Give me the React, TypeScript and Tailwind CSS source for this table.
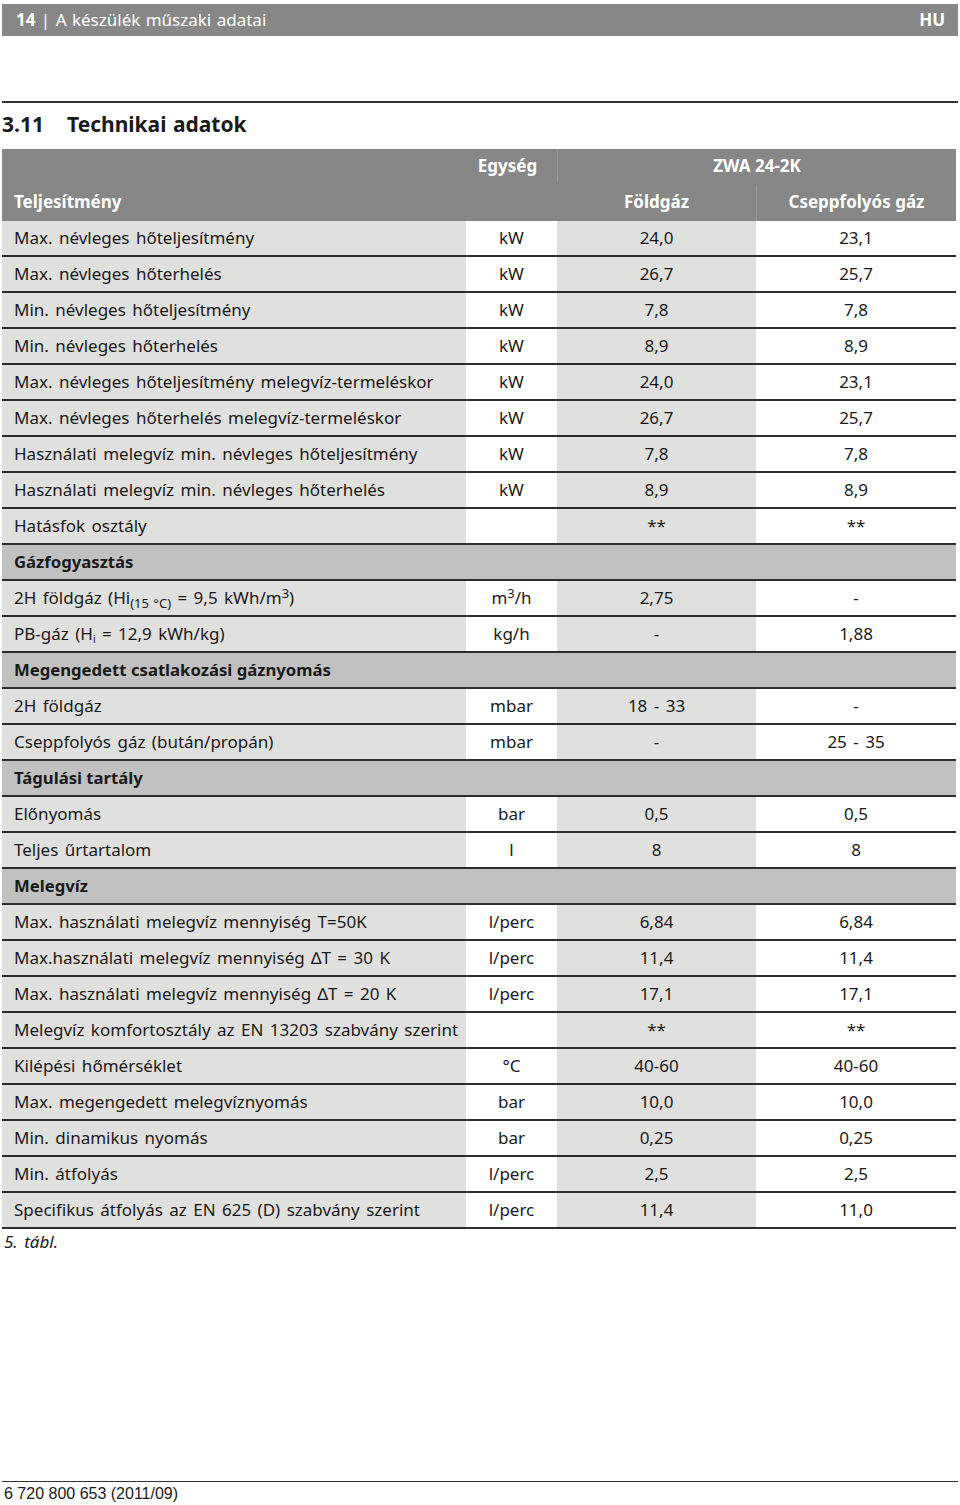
type Row =
  | { kind: "section"; label: string }
  | { kind: "data"; label: React.ReactNode; unit: React.ReactNode; a: string; b: string };

const rows: Row[] = [
  { kind: "data", label: "Max. névleges hőteljesítmény", unit: "kW", a: "24,0", b: "23,1" },
  { kind: "data", label: "Max. névleges hőterhelés", unit: "kW", a: "26,7", b: "25,7" },
  { kind: "data", label: "Min. névleges hőteljesítmény", unit: "kW", a: "7,8", b: "7,8" },
  { kind: "data", label: "Min. névleges hőterhelés", unit: "kW", a: "8,9", b: "8,9" },
  { kind: "data", label: "Max. névleges hőteljesítmény melegvíz-termeléskor", unit: "kW", a: "24,0", b: "23,1" },
  { kind: "data", label: "Max. névleges hőterhelés melegvíz-termeléskor", unit: "kW", a: "26,7", b: "25,7" },
  { kind: "data", label: "Használati melegvíz min. névleges hőteljesítmény", unit: "kW", a: "7,8", b: "7,8" },
  { kind: "data", label: "Használati melegvíz min. névleges hőterhelés", unit: "kW", a: "8,9", b: "8,9" },
  { kind: "data", label: "Hatásfok osztály", unit: "", a: "**", b: "**" },
  { kind: "section", label: "Gázfogyasztás" },
  {
    kind: "data",
    label: (
      <>
        2H földgáz (Hi<sub className="text-[13px] [word-spacing:1px]">(15 °C)</sub>
        {" = 9,5 kWh/m"}
        <sup className="text-[13px]">3</sup>)
      </>
    ),
    unit: (
      <>
        m<sup className="text-[13px]">3</sup>/h
      </>
    ),
    a: "2,75",
    b: "-",
  },
  {
    kind: "data",
    label: (
      <>
        PB-gáz (H<sub className="text-[10px]">i</sub>
        {" = 12,9 kWh/kg)"}
      </>
    ),
    unit: "kg/h",
    a: "-",
    b: "1,88",
  },
  { kind: "section", label: "Megengedett csatlakozási gáznyomás" },
  { kind: "data", label: "2H földgáz", unit: "mbar", a: "18 - 33", b: "-" },
  { kind: "data", label: "Cseppfolyós gáz (bután/propán)", unit: "mbar", a: "-", b: "25 - 35" },
  { kind: "section", label: "Tágulási tartály" },
  { kind: "data", label: "Előnyomás", unit: "bar", a: "0,5", b: "0,5" },
  { kind: "data", label: "Teljes űrtartalom", unit: "l", a: "8", b: "8" },
  { kind: "section", label: "Melegvíz" },
  { kind: "data", label: "Max. használati melegvíz mennyiség T=50K", unit: "l/perc", a: "6,84", b: "6,84" },
  { kind: "data", label: "Max.használati melegvíz mennyiség ∆T = 30 K", unit: "l/perc", a: "11,4", b: "11,4" },
  { kind: "data", label: "Max. használati melegvíz mennyiség ∆T = 20 K", unit: "l/perc", a: "17,1", b: "17,1" },
  { kind: "data", label: "Melegvíz komfortosztály az EN 13203 szabvány szerint", unit: "", a: "**", b: "**" },
  { kind: "data", label: "Kilépési hőmérséklet", unit: "°C", a: "40-60", b: "40-60" },
  { kind: "data", label: "Max. megengedett melegvíznyomás", unit: "bar", a: "10,0", b: "10,0" },
  { kind: "data", label: "Min. dinamikus nyomás", unit: "bar", a: "0,25", b: "0,25" },
  { kind: "data", label: "Min. átfolyás", unit: "l/perc", a: "2,5", b: "2,5" },
  { kind: "data", label: "Specifikus átfolyás az EN 625 (D) szabvány szerint", unit: "l/perc", a: "11,4", b: "11,0" },
];

const cols = "grid grid-cols-[464px_91px_199px_200px]";

export default function App() {
  return (
    <div className="w-[960px] h-[1505px] bg-white text-[#1a1a1a] font-['Noto_Sans',sans-serif] text-[17px] [word-spacing:2px] flex flex-col px-[2px] pt-[4px]">
      {/* page header */}
      <div className="h-[32px] bg-[#878787] text-white flex items-center justify-between pl-[14px] pr-[13px] [word-spacing:1px]">
        <span>
          <span className="font-bold">14</span> | A készülék műszaki adatai
        </span>
        <span className="font-bold">HU</span>
      </div>

      <div className="mt-[65px] h-[2px] bg-[#333]" />

      <h2 className="mt-[8px] h-[26px] flex items-center text-[21px] font-bold leading-none [word-spacing:1px]">
        <span className="w-[65px]">3.11</span>
        <span>Technikai adatok</span>
      </h2>

      {/* table */}
      <div className="mt-[12px] w-[954px]">
        <div className={`${cols} bg-[#878787] text-white font-bold [word-spacing:0px]`}>
          <div className="h-[36px]" />
          <div className="h-[36px] flex items-center justify-center pr-[8px] pb-[3px]">Egység</div>
          <div className="col-span-2 h-[36px] flex items-center pb-[3px]">
            <div className="w-px h-[32px] bg-[#9a9a9a]" />
            <div className="flex-1 text-center">ZWA 24-2K</div>
          </div>
          <div className="h-[36px] flex items-center pl-[12px] pb-[2px]">Teljesítmény</div>
          <div className="h-[36px]" />
          <div className="h-[36px] flex items-center justify-center pb-[2px]">Földgáz</div>
          <div className="h-[36px] flex items-center border-l border-[#9a9a9a] pb-[2px]">
            <div className="flex-1 text-center">Cseppfolyós gáz</div>
          </div>
        </div>

        {rows.map((r, i) => {
          if (r.kind === "section") {
            return (
              <div
                key={i}
                className="h-[36px] bg-[#c1c1c1] border-b-2 border-[#2e2e2e] flex items-center pl-[12px] font-bold text-[16.7px] [word-spacing:0px]"
              >
                {r.label}
              </div>
            );
          }
          return (
            <div key={i} className={`${cols} h-[36px] border-b-2 border-[#2e2e2e]`}>
              <div className="bg-[#e0e0de] flex items-center pl-[12px] whitespace-nowrap">
                <span>{r.label}</span>
              </div>
              <div className="bg-white flex items-center justify-center">
                <span>{r.unit}</span>
              </div>
              <div className="bg-[#e0e0de] flex items-center justify-center">{r.a}</div>
              <div className="bg-white flex items-center justify-center">{r.b}</div>
            </div>
          );
        })}
      </div>

      <p className="mt-[1px] pl-[2px] italic leading-[24px]">5. tábl.</p>

      <div className="mt-auto mb-[2px]">
        <div className="h-px bg-[#333]" />
        <p className="pl-[2px] pt-[3px] text-[16px] leading-[18px] [word-spacing:0px] font-['Liberation_Sans',sans-serif]">
          6 720 800 653 (2011/09)
        </p>
      </div>
    </div>
  );
}
